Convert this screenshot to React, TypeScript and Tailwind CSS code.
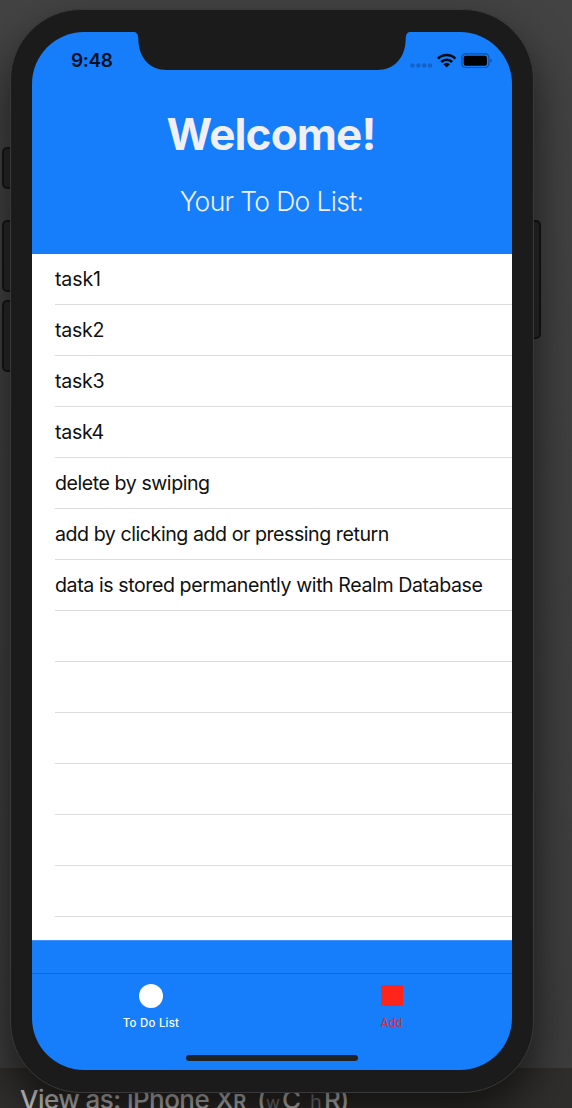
const tasks = [
  { text: "task1", tracking: "tracking-[-0.15px]" },
  { text: "task2", tracking: "tracking-[-0.3px]" },
  { text: "task3", tracking: "tracking-[-0.3px]" },
  { text: "task4", tracking: "tracking-[-0.3px]" },
  { text: "delete by swiping", tracking: "tracking-[-0.45px]" },
  { text: "add by clicking add or pressing return", tracking: "tracking-[-0.45px]" },
  { text: "data is stored permanently with Realm Database", tracking: "tracking-[-0.42px]" },
];

const emptyRows = [0, 1, 2, 3, 4, 5];

function StatusBar() {
  return (
    <div className="flex h-[61px] shrink-0 justify-between">
      <span className="mt-[17px] ml-[39px] text-[19px] leading-[24px] font-semibold tracking-[-0.4px] text-[#04101f]">9:48</span>
      <svg className="mt-[20px] mr-[19px] h-[18px] w-[84px]" viewBox="0 0 84 18">
        <g fill="#1263c8">
          <rect x="1.4" y="11.4" width="4.2" height="4.2" rx="1.4" />
          <rect x="7.3" y="11.4" width="4.2" height="4.2" rx="1.4" />
          <rect x="13.2" y="11.4" width="4.2" height="4.2" rx="1.4" />
          <rect x="18.9" y="11.4" width="4.2" height="4.2" rx="1.4" />
        </g>
        <g fill="none" stroke="#020a14" strokeWidth="2.7">
          <path d="M29 6.6A12.3 12.3 0 0 1 46.4 6.6" />
          <path d="M32.2 10A7.8 7.8 0 0 1 43.2 10" />
        </g>
        <path d="M34.4 12.2A4.8 4.8 0 0 1 41 12.2L37.7 15.6Z" fill="#020a14" />
        <rect x="52.9" y="1.8" width="27" height="13.7" rx="3.7" fill="none" stroke="#0e4f9f" strokeWidth="1.2" />
        <rect x="54.7" y="3.8" width="23.2" height="9.9" rx="2" fill="#000000" />
        <path d="M81.3 6.5C83.3 7.3 83.3 9.9 81.3 10.7Z" fill="#0e4f9f" />
      </svg>
    </div>
  );
}

function Notch() {
  return (
    <svg className="absolute top-0 left-[97px] h-[39px] w-[286px]" viewBox="0 0 286 39" fill="#1b1b1b">
      <path d="M0 0H5C8 .2 9.2 2.8 9.3 7C9.5 25 20 38 38 38H248C266 38 276.500 25 276.700 7C276.800 2.800 278 .2 281 0Z" />
    </svg>
  );
}

export default function App() {
  return (
    <div className="relative flex h-[1108px] w-[572px] flex-col overflow-hidden bg-[#414141] font-['Inter','Liberation_Sans',sans-serif]">
      <div className="flex-1 bg-linear-to-b from-[#434343] to-[#3d3d3d]" />
      <div className="h-[40px] bg-[#302e2c] pt-[14px] pl-[20px] whitespace-nowrap">
        <p className="flex items-baseline text-[26px] leading-[36px] font-medium text-[#d0d0d0]">
          <span className="w-[237px] tracking-[-0.55px]">View as: iPhone X<span className="text-[20px] font-semibold">R</span></span>
          <span className="w-[9px]">(</span>
          <span className="w-[16px] text-[17px] font-normal text-[#858585]">w</span>
          <span className="w-[28px]">C</span>
          <span className="w-[14px] text-[20px] font-normal text-[#858585]">h</span>
          <span className="tracking-[-1px]">R)</span>
        </p>
      </div>

      <div className="absolute top-0 left-0 h-[1108px] w-[572px]">
        <div className="absolute top-[147px] left-[2px] h-[42px] w-[16px] rounded-[5px] border-2 border-[#161616] bg-[#292929]" />
        <div className="absolute top-[220px] left-[2px] h-[72px] w-[16px] rounded-[5px] border-2 border-[#161616] bg-[#292929]" />
        <div className="absolute top-[300px] left-[2px] h-[72px] w-[16px] rounded-[5px] border-2 border-[#161616] bg-[#292929]" />
        <div className="absolute top-[220px] left-[525px] h-[119px] w-[16px] rounded-[5px] border-2 border-[#161616] bg-[#292929]" />

        <div className="absolute top-[9px] left-[10px] h-[1084px] w-[524px] rounded-[71px] border border-[#393939] bg-[#1b1b1b] p-[21px] pt-[22px] shadow-[0_22px_45px_0_rgba(0,0,0,0.62)]">
          <main className="relative flex h-[1038px] w-[480px] flex-col overflow-hidden rounded-[52px] bg-[#167efb]">
            <Notch />
            <StatusBar />
            <header className="flex h-[161px] shrink-0 flex-col items-center text-[#efeff4]">
              <h1 className="mt-[13px] pr-[2px] text-[44px] leading-[56px] font-bold tracking-[-0.85px]">Welcome!</h1>
              <h2 className="mt-[21px] pr-px text-[26.5px] leading-[36px] font-[350] tracking-[-0.66px]">Your To Do List:</h2>
            </header>
            <ul className="h-[686px] shrink-0 overflow-hidden bg-white pl-[23px]">
              {tasks.map((task) => (
                <li key={task.text} className="flex h-[51px] items-center border-b border-[#dcdcde] pt-[2px] text-[19.6px] whitespace-nowrap text-[#111111]">
                  <span className={task.tracking}>{task.text}</span>
                </li>
              ))}
              {emptyRows.map((row) => (
                <li key={row} className="h-[51px] border-b border-[#dcdcde]" />
              ))}
            </ul>
            <div className="h-[33px] shrink-0 border-t border-[#3c94fb]" />
            <nav className="grid flex-1 grid-cols-2 border-t border-[#1269d1] text-[11.4px] leading-[14px] font-medium">
              <div className="flex flex-col items-center pt-[10px] pr-[2px] text-white">
                <span className="h-[24px] w-[24px] rounded-full bg-white" />
                <span className="mt-[8px] tracking-[0.25px]">To Do List</span>
              </div>
              <div className="flex flex-col items-center pt-[11px] pr-px text-[#c33550]">
                <span className="h-[21px] w-[22px] bg-[#ff251b]" />
                <span className="mt-[10px]">Add</span>
              </div>
            </nav>
            <div className="absolute bottom-[9px] left-[154px] h-[6px] w-[172px] rounded-full bg-[#202326]" />
          </main>
        </div>
      </div>
    </div>
  );
}
